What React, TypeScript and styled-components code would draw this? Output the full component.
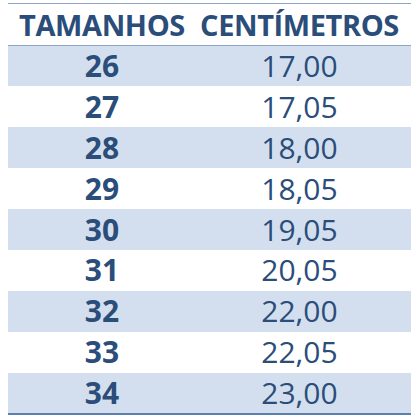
import styled, { createGlobalStyle } from "styled-components";

const GlobalStyle = createGlobalStyle`
  html, body {
    margin: 0;
    padding: 0;
    background: #ffffff;
  }
  body {
    font-family: "Open Sans", "Noto Sans", sans-serif;
  }
`;

const Page = styled.div`
  width: 420px;
  height: 420px;
  padding: 3px 0 0 8px;
  box-sizing: border-box;
`;

const Table = styled.table`
  width: 403px;
  border-collapse: collapse;
  border-top: 1px solid #8ea6c6;
  border-bottom: 2px solid #5b7fae;
  color: #2a4d7a;
`;

const HeadCell = styled.th<{ $right?: boolean }>`
  height: 41px;
  padding: 0 ${(p) => (p.$right ? "8px" : "0")} 0 0;
  font-size: 29px;
  font-weight: 700;
  text-align: center;
  border-bottom: 1px solid #8ea6c6;
  letter-spacing: -0.4px;
  white-space: nowrap;
`;

const Row = styled.tr<{ $band: boolean }>`
  height: 40.9px;
  background: ${(p) => (p.$band ? "#d3dfee" : "#ffffff")};
`;

const Cell = styled.td<{ $bold?: boolean }>`
  padding: 0 ${(p) => (p.$bold ? "0" : "8px")} 0 0;
  font-size: 30px;
  font-weight: ${(p) => (p.$bold ? 700 : 400)};
  text-align: center;
  line-height: 1;
`;

const rows: [string, string][] = [
  ["26", "17,00"],
  ["27", "17,05"],
  ["28", "18,00"],
  ["29", "18,05"],
  ["30", "19,05"],
  ["31", "20,05"],
  ["32", "22,00"],
  ["33", "22,05"],
  ["34", "23,00"],
];

export default function App() {
  return (
    <Page>
      <GlobalStyle />
      <Table>
        <thead>
          <tr>
            <HeadCell style={{ width: "188px" }}>TAMANHOS</HeadCell>
            <HeadCell $right>CENTÍMETROS</HeadCell>
          </tr>
        </thead>
        <tbody>
          {rows.map(([size, cm], i) => (
            <Row key={size} $band={i % 2 === 0}>
              <Cell $bold>{size}</Cell>
              <Cell>{cm}</Cell>
            </Row>
          ))}
        </tbody>
      </Table>
    </Page>
  );
}
